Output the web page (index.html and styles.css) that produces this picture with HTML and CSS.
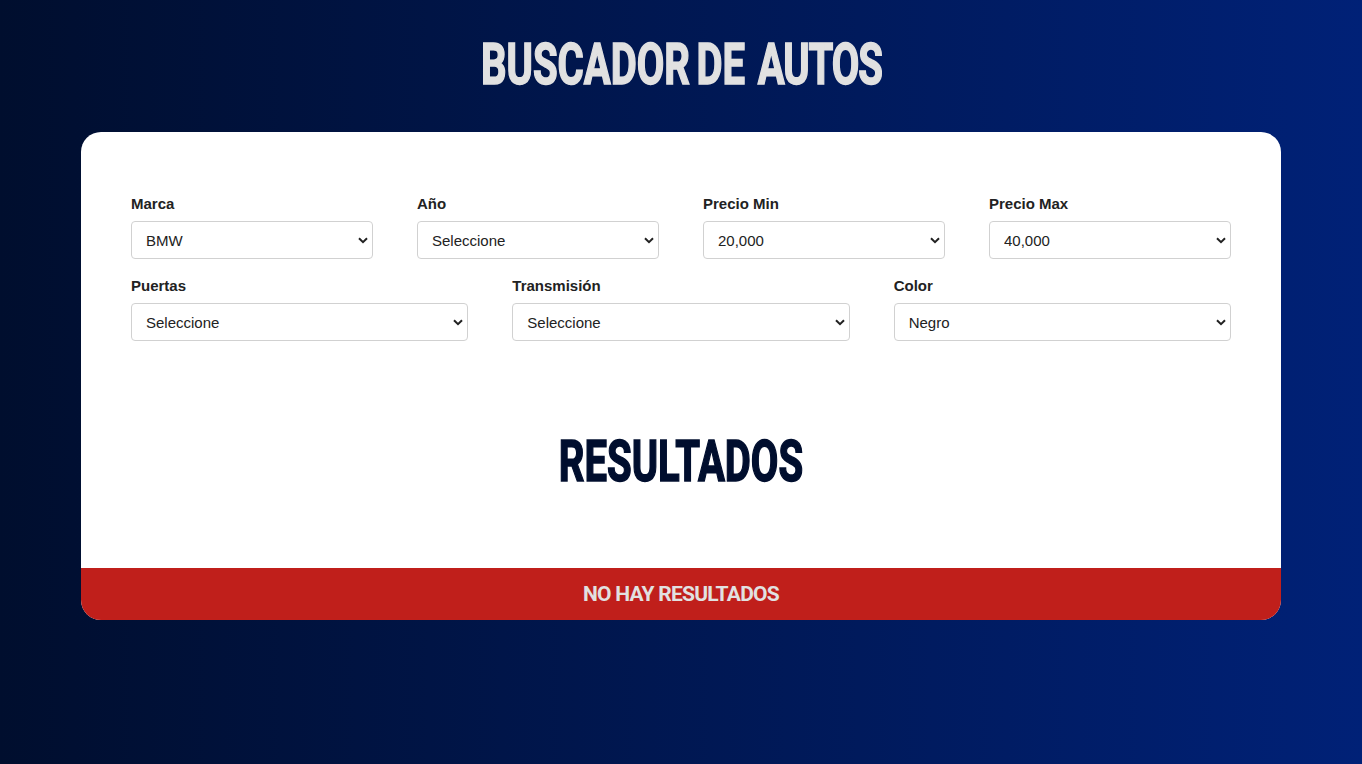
FILE: index.html
```html
<!DOCTYPE html>
<html lang="es">
<head>
<meta charset="utf-8">
<title>Buscador de Autos</title>
<link rel="stylesheet" href="styles.css">
</head>
<body>
<h1 class="title"><span class="condensed">BUSCADOR DE <span class="last-word">AUTOS</span></span></h1>
<main class="card">
  <form class="search">
    <div class="row">
      <div class="field"><label for="marca">Marca</label><div class="control"><select id="marca"><option>BMW</option></select><svg class="chevron" viewBox="0 0 10 7"><path d="M1 1.2 5 5.2 9 1.2"/></svg></div></div>
      <div class="field"><label for="year">Año</label><div class="control"><select id="year"><option>Seleccione</option></select><svg class="chevron" viewBox="0 0 10 7"><path d="M1 1.2 5 5.2 9 1.2"/></svg></div></div>
      <div class="field"><label for="minimo">Precio Min</label><div class="control"><select id="minimo"><option>20,000</option></select><svg class="chevron" viewBox="0 0 10 7"><path d="M1 1.2 5 5.2 9 1.2"/></svg></div></div>
      <div class="field"><label for="maximo">Precio Max</label><div class="control"><select id="maximo"><option>40,000</option></select><svg class="chevron" viewBox="0 0 10 7"><path d="M1 1.2 5 5.2 9 1.2"/></svg></div></div>
    </div>
    <div class="row">
      <div class="field"><label for="puertas">Puertas</label><div class="control"><select id="puertas"><option>Seleccione</option></select><svg class="chevron" viewBox="0 0 10 7"><path d="M1 1.2 5 5.2 9 1.2"/></svg></div></div>
      <div class="field"><label for="transmision">Transmisión</label><div class="control"><select id="transmision"><option>Seleccione</option></select><svg class="chevron" viewBox="0 0 10 7"><path d="M1 1.2 5 5.2 9 1.2"/></svg></div></div>
      <div class="field"><label for="color">Color</label><div class="control"><select id="color"><option>Negro</option></select><svg class="chevron" viewBox="0 0 10 7"><path d="M1 1.2 5 5.2 9 1.2"/></svg></div></div>
    </div>
  </form>
  <h2 class="subtitle"><span class="condensed">RESULTADOS</span></h2>
  <div class="alert">NO HAY RESULTADOS</div>
</main>
</body>
</html>
```
FILE: styles.css
```css
* { box-sizing: border-box; }
body {
  margin: 0;
  min-height: 764px;
  background: linear-gradient(to right, #000e2e, #002177);
  font-family: "Liberation Sans", Arial, sans-serif;
  font-size: 15px;
  color: #222;
}
.title, .subtitle {
  margin: 0;
  text-align: center;
  font-family: Roboto, sans-serif;
  font-size: 58px;
  font-weight: 700;
  line-height: 60px;
  white-space: nowrap;
}
.title { height: 132px; padding-top: 34px; color: #e1e1e1; }
.title .condensed { word-spacing: -5px; }
.last-word { margin-left: 9px; letter-spacing: -1.5px; }
.condensed {
  display: inline-block;
  transform: scaleX(.69);
  -webkit-text-stroke: 1.6px currentColor;
}
.card {
  width: 1200px;
  height: 488px;
  margin: 0 auto;
  background: #fff;
  border-radius: 20px;
  overflow: hidden;
}
.search { padding: 60px 50px 0; }
.row { display: flex; gap: 44px; height: 82px; }
.field { flex: 1; min-width: 0; }
.field label {
  display: block;
  height: 29px;
  line-height: 24px;
  font-weight: 700;
}
.control { position: relative; }
.field select {
  appearance: none;
  display: block;
  width: 100%;
  height: 38px;
  padding: 0 14px;
  border: 1px solid #d1d1d1;
  border-radius: 4px;
  background-color: #fff;
  font: 15px "Liberation Sans", Arial, sans-serif;
  color: #222;
}
.chevron {
  position: absolute;
  right: 5px;
  top: 16px;
  width: 10px;
  height: 7px;
  fill: none;
  stroke: #222;
  stroke-width: 2;
  pointer-events: none;
}
.subtitle { height: 212px; padding-top: 75px; color: #000e2e; }
.alert {
  height: 52px;
  line-height: 52px;
  background: #c01f1b;
  color: #e1e1e1;
  text-align: center;
  font-family: Roboto, sans-serif;
  font-size: 21px;
  font-weight: 700;
  letter-spacing: -.75px;
}
```
